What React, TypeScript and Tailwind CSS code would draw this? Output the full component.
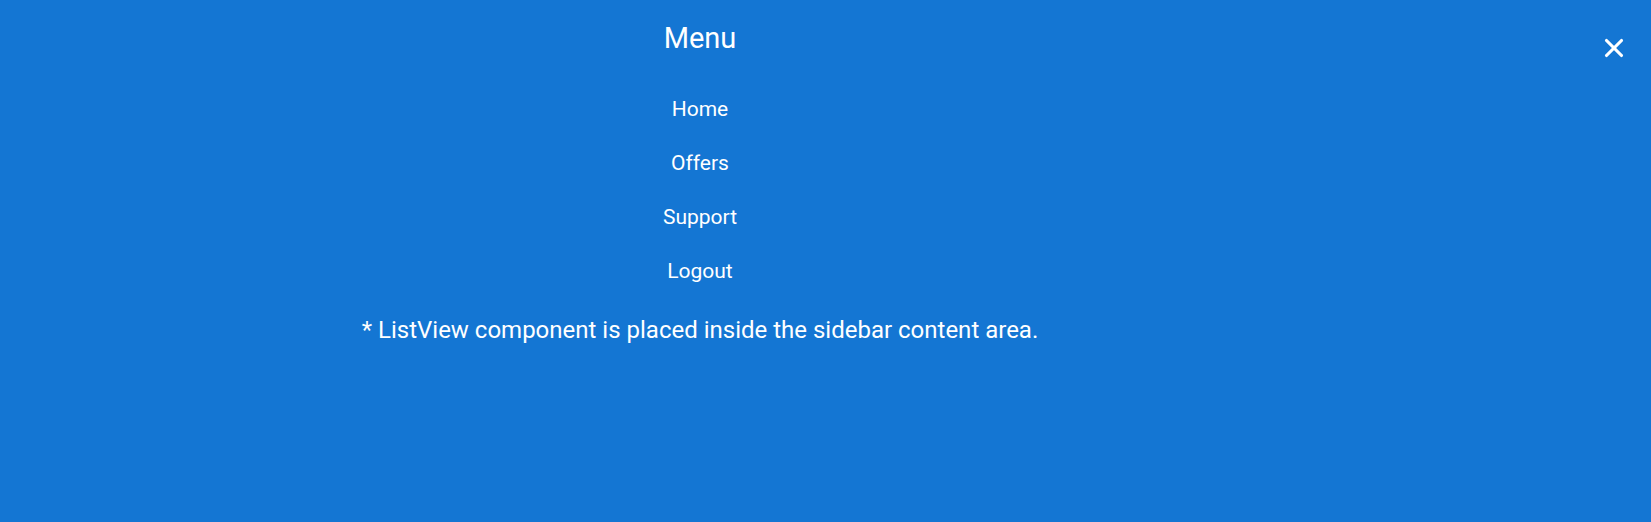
import React from "react";
import { X } from "lucide-react";

const items = ["Home", "Offers", "Support", "Logout"];

export default function App() {
  return (
    <div
      className="relative flex h-[522px] w-full bg-[#1476d3] text-white"
      style={{ fontFamily: "Roboto, 'Noto Sans', sans-serif" }}
    >
      <div className="flex w-[1400px] flex-col items-center pt-[20px]">
        <h1 className="text-[29px] leading-[36px] font-normal">Menu</h1>
        <ul className="mt-[26px] flex flex-col items-center">
          {items.map((item) => (
            <li key={item} className="text-[21px] leading-[54px] font-normal">
              {item}
            </li>
          ))}
        </ul>
        <p className="mt-[17px] text-[24px] leading-[30px] font-normal">
          * ListView component is placed inside the sidebar content area.
        </p>
      </div>
      <button className="absolute right-[18px] top-[29px] p-1 text-white" aria-label="Close">
        <X className="h-[30px] w-[30px]" strokeWidth={2.5} />
      </button>
    </div>
  );
}
